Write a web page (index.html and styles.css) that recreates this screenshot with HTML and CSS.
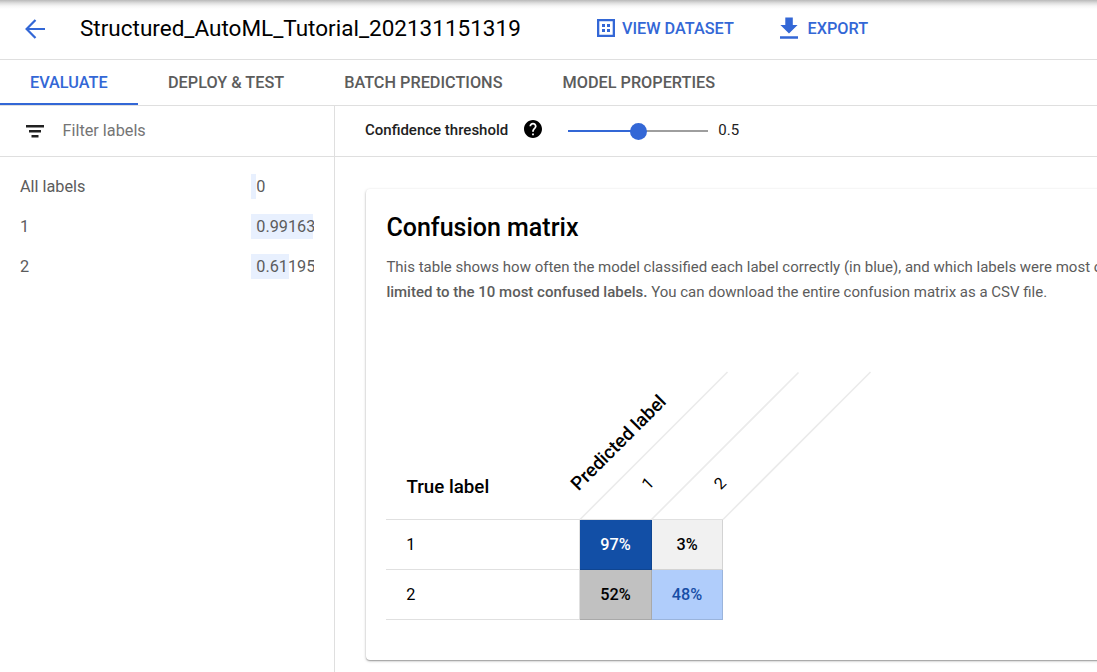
FILE: index.html
```html
<!DOCTYPE html>
<html lang="en">
<head>
<meta charset="utf-8">
<title>Structured_AutoML_Tutorial_202131151319</title>
<link rel="stylesheet" href="styles.css">
</head>
<body>
<div class="app">
  <header class="topbar">
    <svg class="back" viewBox="0 0 20 20"><path d="M10.5 .9 1.6 10l8.9 9.1M2 10h18" fill="none" stroke="#3367d6" stroke-width="2.2"/></svg>
    <h1 class="title">Structured_AutoML_Tutorial_202131151319</h1>
    <a class="action action-dataset">
      <svg class="icon-dataset" viewBox="0 0 18 18"><path d="M1.15 1.15h15.7v15.7H1.15z" fill="none" stroke="#3367d6" stroke-width="2.3"/><path d="M5 5h3v3H5zM10 5h3v3h-3zM5 10h3v3H5zM10 10h3v3h-3z" fill="#3367d6"/></svg>
      <span>VIEW DATASET</span>
    </a>
    <a class="action action-export">
      <svg class="icon-export" viewBox="0 0 18 22"><path d="M5.3.6h7.5v7.3H17.6L9 16.6.4 7.9h4.9zM0 19.3h18v2.5H0z" fill="#3367d6"/></svg>
      <span>EXPORT</span>
    </a>
  </header>
  <nav class="tabs">
    <a class="tab tab-active">EVALUATE</a>
    <a class="tab">DEPLOY &amp; TEST</a>
    <a class="tab">BATCH PREDICTIONS</a>
    <a class="tab">MODEL PROPERTIES</a>
  </nav>
  <div class="body">
    <aside class="sidebar">
      <div class="filter">
        <svg class="icon-filter" viewBox="0 0 18 13"><path d="M0 0h18v2.5H0zM3 5h12v2.5H3zM5.5 10h7v2.5h-7z" fill="#212121"/></svg>
        <span>Filter labels</span>
      </div>
      <ul class="labels">
        <li class="label-row"><span>All labels</span><span class="score"><i class="bar" style="width:5px"></i><b>0</b></span></li>
        <li class="label-row"><span>1</span><span class="score"><i class="bar" style="width:62px"></i><b>0.99163</b></span></li>
        <li class="label-row"><span>2</span><span class="score"><i class="bar" style="width:38px"></i><b>0.61195</b></span></li>
      </ul>
    </aside>
    <main class="main">
      <div class="threshold">
        <span class="threshold-name">Confidence threshold</span>
        <svg class="icon-help" viewBox="2 2 20 20"><path d="M12 2C6.48 2 2 6.48 2 12s4.48 10 10 10 10-4.48 10-10S17.52 2 12 2zm1 17h-2v-2h2v2zm2.07-7.75l-.9.92C13.45 12.9 13 13.5 13 15h-2v-.5c0-1.1.45-2.1 1.17-2.83l1.24-1.26c.37-.36.59-.86.59-1.41 0-1.1-.9-2-2-2s-2 .9-2 2H8c0-2.21 1.79-4 4-4s4 1.79 4 4c0 .88-.36 1.68-.93 2.25z" fill="#000"/></svg>
        <div class="slider"><div class="track-on"></div><div class="track-off"></div><div class="thumb"></div></div>
        <span class="threshold-value">0.5</span>
      </div>
      <section class="card">
        <h2 class="card-title">Confusion matrix</h2>
        <p class="desc">This table shows how often the model classified each label correctly (in blue), and which labels were most often confused<br><strong>limited to the 10 most confused labels.</strong> You can download the entire confusion matrix as a CSV file.</p>
        <div class="matrix-head">
          <span class="true-label">True label</span>
          <svg class="slanted" width="310" height="148" viewBox="0 0 310 148">
            <path d="M14 147.5 161.5 0M85.5 147.5 232.5 .5M157 147.5 304.5 0" fill="none" stroke="#ebebeb" stroke-width="1.6"/>
            <text class="predicted" transform="translate(12.5 119.5) rotate(-45)">Predicted label</text>
            <text class="column" transform="translate(82.5 118.5) rotate(-45)">1</text>
            <text class="column" transform="translate(154.7 118.5) rotate(-45)">2</text>
          </svg>
        </div>
        <div class="matrix">
          <div class="name">1</div><div class="cell c97">97%</div><div class="cell c3">3%</div>
          <div class="name">2</div><div class="cell c52">52%</div><div class="cell c48">48%</div>
        </div>
      </section>
    </main>
  </div>
</div>
</body>
</html>
```
FILE: styles.css
```css
* { box-sizing: border-box; }
body { margin: 0; font-family: Roboto, "Liberation Sans", sans-serif; font-size: 16.25px; color: #212121; background: #fff; overflow: hidden; }
.app { display: flex; flex-direction: column; width: 1097px; height: 672px; overflow: hidden; }
.topbar { display: flex; align-items: center; height: 60px; padding: 0 0 3px 25px; border-bottom: 1px solid #dfdfdf; flex: none;
  background: linear-gradient(#b9b9b9, #dedede 3px, #f6f6f6 6px, #fff 9px); }
.back { width: 20px; height: 20px; margin-top: 2px; }
.title { margin: 0 0 0 35px; width: 517px; font-size: 22.5px; font-weight: 400; color: #000; white-space: nowrap; }
.action { display: flex; align-items: center; color: #3367d6; font-weight: 500; white-space: nowrap; }
.icon-dataset { width: 18px; height: 18px; margin-right: 7px; }
.action-dataset { width: 183px; }
.icon-export { width: 18px; height: 22px; margin-right: 9.5px; }
.tabs { display: flex; height: 46px; border-bottom: 1px solid #dfdfdf; flex: none; }
.tab { padding: 0 30px; line-height: 45px; font-weight: 500; color: #5c5c5c; white-space: nowrap; }
.tab-active { width: 138px; color: #3367d6; box-shadow: inset 0 -2px #3367d6; }
.body { display: flex; flex: 1; min-height: 0; }
.sidebar { width: 335px; border-right: 1px solid #dfdfdf; flex: none; }
.filter { display: flex; align-items: center; height: 51px; padding: 0 0 1px 26px; border-bottom: 1px solid #dfdfdf; color: #757575; }
.icon-filter { width: 18px; height: 13px; margin: 1px 18.5px 0 0; }
.labels { list-style: none; margin: 0; padding: 9px 20px 0; color: #5c5c5c; }
.label-row { display: flex; justify-content: space-between; align-items: center; height: 40px; }
.score { display: grid; width: 63px; height: 25px; line-height: 25px; overflow: hidden; margin-top: 1px; }
.bar, .score b { grid-area: 1 / 1; }
.bar { background: #e8f0fe; }
.score b { font-weight: 400; padding-left: 5.3px; }
.main { flex: 1; min-width: 0; overflow: hidden; }
.threshold { display: flex; align-items: center; height: 51px; padding: 0 0 2px 30px; border-bottom: 1px solid #dfdfdf; font-size: 15px; }
.threshold-name { width: 159.3px; font-weight: 500; white-space: nowrap; }
.icon-help { width: 18px; height: 18px; margin: 0 25.7px 2px 0; }
.slider { display: grid; grid-template-columns: 70px 70px; align-items: center; width: 140px; height: 18px; margin: 3px 10.3px 0 0; }
.track-on { grid-area: 1 / 1; height: 2px; margin-bottom: 2px; background: #3367d6; }
.track-off { grid-area: 1 / 2; height: 2px; margin-bottom: 2px; background: #9e9e9e; }
.thumb { grid-area: 1 / 1 / 2 / 3; justify-self: center; width: 17px; height: 17px; margin-left: 1.4px; border-radius: 50%; background: #3367d6; }
.card { width: 1000px; height: 471px; margin: 32px 0 0 31px; padding: 0 20px; border-radius: 4px; box-shadow: 0 1px 3px rgba(0,0,0,.28), 0 1px 1px rgba(0,0,0,.2); }
.card-title { margin: 0; padding: 20px 0 0 .4px; line-height: 38px; font-size: 25px; font-weight: 500; color: #000; }
.desc { margin: 8px 0 0 .4px; font-size: 15px; line-height: 25px; color: #5c5c5c; white-space: nowrap; }
.desc strong { font-weight: 500; }
.matrix-head { display: flex; align-items: flex-end; height: 214px; color: #000; }
.true-label { width: 180px; padding: 0 0 21px 20.4px; font-size: 18.75px; font-weight: 500; white-space: nowrap; }
.slanted { overflow: visible; margin-bottom: -1px; }
.predicted { font-size: 18.75px; font-weight: 500; }
.column { font-size: 16.25px; }
.matrix { display: grid; grid-template-columns: 194px 72px 71px; grid-template-rows: 50px 50px; width: 337px; border-top: 1px solid #e0e0e0; color: #000; }
.name { padding-left: 20.2px; line-height: 50px; border-right: 1px solid #e0e0e0; border-bottom: 1px solid #e0e0e0; }
.cell { text-align: center; line-height: 50px; font-weight: 500; border-right: 1px solid rgba(0,0,0,.12); border-bottom: 1px solid rgba(0,0,0,.12); }
.c97 { background: #124fa6; color: #fff; }
.c3 { background: #f1f1f1; }
.c52 { background: #c1c1c1; }
.c48 { background: #b0cdfb; color: #174ea6; }
```
